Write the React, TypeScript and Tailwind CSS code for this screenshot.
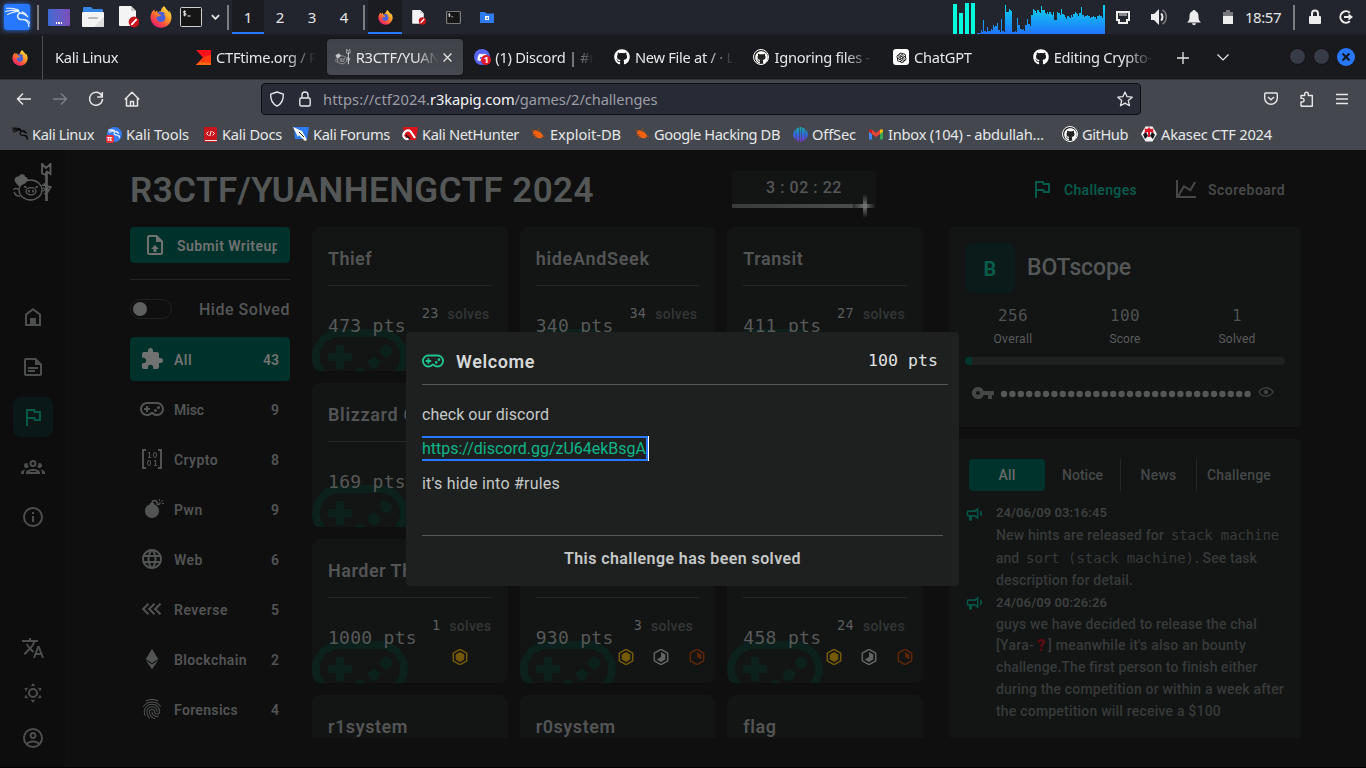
import { useLayoutEffect, useRef, useState, type ReactNode } from "react";
import { SiKalilinux } from "react-icons/si";
import { FaFirefoxBrowser, FaGithub, FaDiscord } from "react-icons/fa";
import { MdFingerprint, MdLanguage, MdVpnKey } from "react-icons/md";
import { AiOutlineOpenAI } from "react-icons/ai";

/* Text that is tracked so that it fills exactly `w` pixels. */
function Label({ w, className = "", children }: { w: number; className?: string; children: string }) {
  const ref = useRef<HTMLSpanElement>(null);
  const [spacing, setSpacing] = useState(0);
  useLayoutEffect(() => {
    if (ref.current) {
      const natural = ref.current.getBoundingClientRect().width;
      setSpacing((w - natural) / children.length);
    }
  }, [w, children]);
  return (
    <span ref={ref} className={"inline-block whitespace-nowrap " + className} style={{ letterSpacing: spacing }}>
      {children}
    </span>
  );
}

const P = {
  home: "M12 3L4 9V21H20V9L12 3M12 5.5L18 10V19H15V13H9V19H6V10L12 5.5",
  note: "M15 3H5A2 2 0 0 0 3 5V19A2 2 0 0 0 5 21H19A2 2 0 0 0 21 19V9L15 3M19 19H5V5H14V10H19M17 14H7V12H17M14 17H7V15H14",
  flag: "M12.36,6L12.76,8H18V14H14.64L14.24,12H7V6H12.36M14,4H5V21H7V14H12.6L13,16H20V6H14.4",
  group:
    "M12,5A3.5,3.5 0 0,0 8.5,8.5A3.5,3.5 0 0,0 12,12A3.5,3.5 0 0,0 15.5,8.5A3.5,3.5 0 0,0 12,5M12,7A1.5,1.5 0 0,1 13.5,8.5A1.5,1.5 0 0,1 12,10A1.5,1.5 0 0,1 10.5,8.5A1.5,1.5 0 0,1 12,7M5.5,8A2.5,2.5 0 0,0 3,10.5C3,11.44 3.53,12.25 4.29,12.68C4.65,12.88 5.06,13 5.5,13C5.94,13 6.35,12.88 6.71,12.68C7.08,12.47 7.39,12.17 7.62,11.81C6.89,10.86 6.5,9.7 6.5,8.5C6.5,8.41 6.5,8.31 6.5,8.22C6.2,8.08 5.86,8 5.5,8M18.5,8C18.14,8 17.8,8.08 17.5,8.22C17.5,8.31 17.5,8.41 17.5,8.5C17.5,9.7 17.11,10.86 16.38,11.81C16.5,12 16.63,12.15 16.78,12.3C16.94,12.45 17.1,12.58 17.29,12.68C17.65,12.88 18.06,13 18.5,13C18.94,13 19.35,12.88 19.71,12.68C20.47,12.25 21,11.44 21,10.5A2.5,2.5 0 0,0 18.5,8M12,14C9.66,14 5,15.17 5,17.5V19H19V17.5C19,15.17 14.34,14 12,14M4.71,14.55C2.78,14.78 0,15.76 0,17.5V19H3V17.07C3,16.06 3.69,15.22 4.71,14.55M19.29,14.55C20.31,15.22 21,16.06 21,17.07V19H24V17.5C24,15.76 21.22,14.78 19.29,14.55M12,16C13.53,16 15.24,16.5 16.23,17H7.77C8.76,16.5 10.47,16 12,16Z",
  info: "M11,9H13V7H11M12,20C7.59,20 4,16.41 4,12C4,7.59 7.59,4 12,4C16.41,4 20,7.59 20,12C20,16.41 16.41,20 12,20M12,2A10,10 0 0,0 2,12A10,10 0 0,0 12,22A10,10 0 0,0 22,12A10,10 0 0,0 12,2M11,17H13V11H11V17Z",
  translate:
    "M12.87,15.07L10.33,12.56L10.36,12.53C12.1,10.59 13.34,8.36 14.07,6H17V4H10V2H8V4H1V6H12.17C11.5,7.92 10.44,9.75 9,11.35C8.07,10.32 7.3,9.19 6.69,8H4.69C5.42,9.63 6.42,11.17 7.67,12.56L2.58,17.58L4,19L9,14L12.11,17.11L12.87,15.07M18.5,10H16.5L12,22H14L15.12,19H19.87L21,22H23L18.5,10M15.88,17L17.5,12.67L19.12,17H15.88Z",
  sun: "M12,7A5,5 0 0,1 17,12A5,5 0 0,1 12,17A5,5 0 0,1 7,12A5,5 0 0,1 12,7M12,9A3,3 0 0,0 9,12A3,3 0 0,0 12,15A3,3 0 0,0 15,12A3,3 0 0,0 12,9M12,2L14.39,5.42C13.65,5.15 12.84,5 12,5C11.16,5 10.35,5.15 9.61,5.42L12,2M3.34,7L7.5,6.65C6.9,7.16 6.36,7.78 5.94,8.5C5.5,9.24 5.25,10 5.11,10.79L3.34,7M3.36,17L5.12,13.23C5.26,14 5.53,14.78 5.95,15.5C6.37,16.24 6.91,16.86 7.5,17.37L3.36,17M20.65,7L18.88,10.79C18.74,10 18.47,9.23 18.05,8.5C17.63,7.78 17.1,7.15 16.5,6.64L20.65,7M20.64,17L16.5,17.36C17.09,16.85 17.62,16.22 18.04,15.5C18.46,14.77 18.73,14 18.87,13.21L20.64,17M12,22L9.59,18.56C10.33,18.83 11.14,19 12,19C12.82,19 13.63,18.83 14.37,18.56L12,22Z",
  account:
    "M12,2A10,10 0 0,0 2,12A10,10 0 0,0 12,22A10,10 0 0,0 22,12A10,10 0 0,0 12,2M7.07,18.28C7.5,17.38 10.12,16.5 12,16.5C13.88,16.5 16.5,17.38 16.93,18.28C15.57,19.36 13.86,20 12,20C10.14,20 8.43,19.36 7.07,18.28M18.36,16.83C16.93,15.09 13.46,14.5 12,14.5C10.54,14.5 7.07,15.09 5.64,16.83C4.62,15.5 4,13.82 4,12C4,7.59 7.59,4 12,4C16.41,4 20,7.59 20,12C20,13.82 19.38,15.5 18.36,16.83M12,6C10.06,6 8.5,7.56 8.5,9.5C8.5,11.44 10.06,13 12,13C13.94,13 15.5,11.44 15.5,9.5C15.5,7.56 13.94,6 12,6M12,11A1.5,1.5 0 0,1 10.5,9.5A1.5,1.5 0 0,1 12,8A1.5,1.5 0 0,1 13.5,9.5A1.5,1.5 0 0,1 12,11Z",
  upload:
    "M14,2L20,8V20A2,2 0 0,1 18,22H6A2,2 0 0,1 4,20V4A2,2 0 0,1 6,2H14M18,20V9H13V4H6V20H18M12,12L16,16H13.5V19H10.5V16H8L12,12Z",
  puzzle:
    "M20.5,11H19V7C19,5.89 18.1,5 17,5H13V3.5A2.5,2.5 0 0,0 10.5,1A2.5,2.5 0 0,0 8,3.5V5H4A2,2 0 0,0 2,7V10.8H3.5C5,10.8 6.2,12 6.2,13.5C6.2,15 5,16.2 3.5,16.2H2V20A2,2 0 0,0 4,22H7.8V20.5C7.8,19 9,17.8 10.5,17.8C12,17.8 13.2,19 13.2,20.5V22H17A2,2 0 0,0 19,20V16H20.5A2.5,2.5 0 0,0 23,13.5A2.5,2.5 0 0,0 20.5,11Z",
  gamepad:
    "M6,9H8V11H10V13H8V15H6V13H4V11H6V9M18.5,9A1.5,1.5 0 0,1 20,10.5A1.5,1.5 0 0,1 18.5,12A1.5,1.5 0 0,1 17,10.5A1.5,1.5 0 0,1 18.5,9M15.5,12A1.5,1.5 0 0,1 17,13.5A1.5,1.5 0 0,1 15.5,15A1.5,1.5 0 0,1 14,13.5A1.5,1.5 0 0,1 15.5,12M17,5A7,7 0 0,1 24,12A7,7 0 0,1 17,19C15.04,19 13.27,18.2 12,16.9C10.73,18.2 8.96,19 7,19A7,7 0 0,1 0,12A7,7 0 0,1 7,5H17M7,7A5,5 0 0,0 2,12A5,5 0 0,0 7,17C8.64,17 10.09,16.21 11,15H13C13.91,16.21 15.36,17 17,17A5,5 0 0,0 22,12A5,5 0 0,0 17,7H7Z",
  matrix:
    "M2,2H6V4H4V20H6V22H2V2M20,4H18V2H22V22H18V20H20V4M9,5H10V10H11V11H8V10H9V6L8,6.5V5.5L9,5M15,13H16V18H17V19H14V18H15V14L14,14.5V13.5L15,13M9,13C10.1,13 11,14.34 11,16C11,17.66 10.1,19 9,19C7.9,19 7,17.66 7,16C7,14.34 7.9,13 9,13M9,14C8.45,14 8,14.9 8,16C8,17.1 8.45,18 9,18C9.55,18 10,17.1 10,16C10,14.9 9.55,14 9,14M15,5C16.1,5 17,6.34 17,8C17,9.66 16.1,11 15,11C13.9,11 13,9.66 13,8C13,6.34 13.9,5 15,5M15,6C14.45,6 14,6.9 14,8C14,9.1 14.45,10 15,10C15.55,10 16,9.1 16,8C16,6.9 15.55,6 15,6Z",
  bomb: "M11.25,6A3.25,3.25 0 0,1 14.5,2.75A3.25,3.25 0 0,1 17.75,6C17.75,6.42 18.08,6.75 18.5,6.75C18.92,6.75 19.25,6.42 19.25,6V5.25H20.75V6A2.25,2.25 0 0,1 18.5,8.25A2.25,2.25 0 0,1 16.25,6A1.75,1.75 0 0,0 14.5,4.25A1.75,1.75 0 0,0 12.75,6H14V7.29C16.89,8.15 19,10.83 19,14A7,7 0 0,1 12,21A7,7 0 0,1 5,14C5,10.83 7.11,8.15 10,7.29V6H11.25M22,6H24V7H22V6M19,4V2H20V4H19M20.91,4.38L22.33,2.96L23.04,3.67L21.62,5.09L20.91,4.38Z",
  ethereum: "M12,1.75L5.75,12.25L12,16L18.25,12.25L12,1.75M5.75,13.5L12,22.25L18.25,13.5L12,17.25L5.75,13.5Z",
  chevrons:
    "M21.2 7.4L16.6 12L21.2 16.6L19.8 18L13.8 12L19.8 6L21.2 7.4M15.2 7.4L10.6 12L15.2 16.6L13.8 18L7.8 12L13.8 6L15.2 7.4M9.2 7.4L4.6 12L9.2 16.6L7.8 18L1.8 12L7.8 6L9.2 7.4Z",
  chart: "M16,11.78L20.24,4.45L21.97,5.45L16.74,14.5L10.23,10.75L5.46,19H22V21H2V3H4V17.54L9.5,8L16,11.78Z",
  bullhorn:
    "M12,8H4A2,2 0 0,0 2,10V14A2,2 0 0,0 4,16H5V20A1,1 0 0,0 6,21H8A1,1 0 0,0 9,20V16H12L17,20V4L12,8M15,15.6L13,14H4V10H13L15,8.4V15.6M21.5,12C21.5,13.71 20.54,15.26 19,16V8C20.53,8.75 21.5,10.3 21.5,12Z",
};

function Icon({ d, className = "size-6" }: { d: string; className?: string }) {
  return (
    <svg viewBox="0 0 24 24" className={"shrink-0 " + className} fill="currentColor">
      <path d={d} />
    </svg>
  );
}

function Slot({ className, children }: { className: string; children?: ReactNode }) {
  return <div className={"flex h-full shrink-0 items-center justify-center " + className}>{children}</div>;
}

function Separator({ className = "w-2" }: { className?: string }) {
  return (
    <Slot className={className}>
      <div className="h-[25px] w-[2px] bg-[#7c7d81]" />
    </Slot>
  );
}

function Firefox({ className }: { className: string }) {
  return (
    <svg viewBox="0 0 512 512" className={className}>
      <defs>
        <linearGradient id="fox" x1="0.85" y1="0.05" x2="0.2" y2="0.95">
          <stop offset="0" stopColor="#ffe14a" />
          <stop offset="0.4" stopColor="#ff9a26" />
          <stop offset="0.7" stopColor="#ff4f3f" />
          <stop offset="1" stopColor="#e31b74" />
        </linearGradient>
      </defs>
      <circle cx="255" cy="275" r="150" fill="#4a5fd8" />
      <FaFirefoxBrowser size={512} fill="url(#fox)" />
    </svg>
  );
}

function BlockedDoc({ className }: { className: string }) {
  return (
    <svg viewBox="0 0 20 22" className={className}>
      <path d="M0 1a1 1 0 0 1 1-1h11l5 5v14a1 1 0 0 1-1 1H1a1 1 0 0 1-1-1z" fill="#f4f4f4" />
      <path d="M12 0l5 5h-4a1 1 0 0 1-1-1z" fill="#c9c9c9" />
      <circle cx="15" cy="16" r="5.4" fill="#c8141c" />
      <path d="M12.8 18.4l4.4-4.8" stroke="#fff" strokeWidth="1.8" strokeLinecap="round" />
    </svg>
  );
}

function Terminal({ className }: { className: string }) {
  return (
    <svg viewBox="0 0 22 20" className={className}>
      <rect x="0.5" y="0.5" width="21" height="19" rx="1" fill="#161616" stroke="#cfcfcf" />
      <path
        d="M6 4.8c-.5-.7-2.7-.9-2.7.4 0 1.2 2.8.7 2.8 2.1 0 1.3-2.3 1.2-2.9.3M4.700 3.500v5.800M7.500 9h3"
        stroke="#f2f2f2"
        strokeWidth="1"
        fill="none"
      />
    </svg>
  );
}

const LOAD = [
  1, 1, 4, 14, 3, 7, 3, 5, 9, 8, 11, 4, 15, 3, 29, 22, 25, 23, 2, 3, 16, 9, 5, 5, 9, 15, 10, 19, 25, 23, 24, 22, 28, 24, 21,
  22, 22, 20, 22, 14, 22, 21, 25, 20, 17, 18, 17, 19, 20, 22, 20, 21, 27, 19, 18, 19, 18, 17, 18, 17, 18, 19, 18, 29,
];

/* Single-pixel peaks stand alone in the quiet stretches of the load curve. */
const isPeak = (i: number) => LOAD[i] > 6 && LOAD[i] - (LOAD[i + 1] ?? 0) > 3;
const LOAD_PATH = LOAD.map((h, i) => {
  const next = LOAD[i + 1] ?? h;
  const second = isPeak(i) ? next : Math.max(1, h - (i % 3));
  return `M${24 + i * 2} 34v${-h}h1v${h}zM${25 + i * 2} 34v${-second}h1v${second}z`;
}).join("");

function SystemLoad() {
  return (
    <svg width="152" height="34" viewBox="0 0 152 34" className="block shrink-0" shapeRendering="crispEdges">
      <defs>
        <linearGradient id="load" gradientUnits="userSpaceOnUse" x1="0" y1="4" x2="0" y2="34">
          <stop offset="0" stopColor="#09d8ea" />
          <stop offset="1" stopColor="#2274ff" />
        </linearGradient>
      </defs>
      <path d="M0 4h4v30H0zM6 13h4v21H6zM12 3h4v31h-4zM18 3h4v31h-4z" fill="#05f9dc" />
      <path d={LOAD_PATH} fill="url(#load)" />
    </svg>
  );
}

function DesktopPanel() {
  return (
    <header className="flex h-[36px] items-start border-b-2 border-[#1c1d22] bg-[#23252e]">
      <div className="flex h-[34px] w-full items-center text-[15px] text-[#e4e5e7]">
        <Slot className="w-[34px]">
          <div className="flex size-[26px] items-center justify-center rounded-[3px] bg-[#2777ff] shadow-[0_0_4px_#2777ff]">
            <SiKalilinux className="size-[25px] stroke-white stroke-[0.6] text-white" />
          </div>
        </Slot>
        <Separator />
        <Slot className="w-[34px]">
          <div className="flex h-[17px] w-[22px] items-end justify-center gap-px rounded-[1px] bg-gradient-to-r from-[#3b6ad6] to-[#7a4fb8] pb-[2px]">
            <i className="size-[1.5px] bg-white" />
            <i className="size-[1.5px] bg-white" />
            <i className="size-[1.5px] bg-white" />
          </div>
        </Slot>
        <Slot className="w-[34px]">
          <svg viewBox="0 0 22 20" className="h-5 w-[22px]">
            <path d="M1 6V1a1 1 0 0 1 1-1h7l2 2h9a1 1 0 0 1 1 1v4z" fill="#3584e4" />
            <rect y="5" width="22" height="15" rx="1" fill="#f3f3f3" />
            <path d="M22 10v9a1 1 0 0 1-1 1H12z" fill="#dedede" />
            <rect x="6" y="10" width="10" height="2" rx="1" fill="#b9b9b9" />
          </svg>
        </Slot>
        <Slot className="w-[37px]">
          <BlockedDoc className="h-[22px] w-5" />
        </Slot>
        <Slot className="w-[28px]">
          <Firefox className="size-[22px]" />
        </Slot>
        <Slot className="w-[31px]">
          <Terminal className="h-5 w-[22px]" />
        </Slot>
        <Slot className="w-[18px]">
          <svg viewBox="0 0 10 6" className="h-[6px] w-[9px]" fill="none" stroke="#e8e8e8" strokeWidth="2">
            <path d="M1 1l4 4 4-4" />
          </svg>
        </Slot>
        <Separator />
        <Slot className="w-8 border-b-2 border-[#2777ff] bg-[#1b1c22] pt-[2px]">1</Slot>
        <Slot className="w-8">2</Slot>
        <Slot className="w-8">3</Slot>
        <Slot className="w-8">4</Slot>
        <Separator />
        <Slot className="w-[34px] border-b-2 border-[#2777ff] bg-[#1b1c22] pt-[2px]">
          <Firefox className="size-[15px]" />
        </Slot>
        <Slot className="w-[34px]">
          <BlockedDoc className="h-[15px] w-[14px]" />
        </Slot>
        <Slot className="w-[34px]">
          <Terminal className="h-[13px] w-[15px]" />
        </Slot>
        <Slot className="w-[34px]">
          <svg viewBox="0 0 14 11" className="h-[11px] w-[14px]">
            <path d="M0 11V0h5l1.5 1.5H14V11z" fill="#2e7cf0" />
            <rect x="5" y="4" width="4" height="4" fill="#fff" />
            <rect x="6.5" y="5.5" width="1.5" height="1.5" fill="#2e7cf0" />
          </svg>
        </Slot>
        <div className="ml-auto flex h-full items-center">
          <SystemLoad />
          <Slot className="w-[36px]">
            <svg viewBox="0 0 14 13" className="h-[13px] w-[14px]" fill="none" stroke="#ededed" strokeWidth="2">
              <path d="M1 1h12v8h-2v3H3V9H1z" />
              <path d="M4 2v3M6 2v3M8 2v3M10 2v3" strokeWidth="1" />
            </svg>
          </Slot>
          <Slot className="w-[36px]">
            <svg viewBox="0 0 18 16" className="h-4 w-[18px]">
              <path d="M1 5h3l5-5v16L4 11H1z" fill="#ededed" />
              <path d="M11 4.5c2 1.5 2 5.5 0 7" stroke="#ededed" strokeWidth="2" fill="none" />
              <path d="M12.500 1c5 3 5 11 0 14" stroke="#77787c" strokeWidth="1.6" fill="none" />
            </svg>
          </Slot>
          <Slot className="w-[34px]">
            <svg viewBox="0 0 14 15" className="h-[15px] w-[14px]" fill="#ededed">
              <path d="M7 0c1 0 1.5.6 1.5 1.3C11 2 11.5 4 11.5 6.5c0 3 .5 4 2.5 6H0c2-2 2.500-3 2.500-6C2.500 4 3 2 5.500 1.300 5.500.6 6 0 7 0zM5 13.200h4C8.700 14.500 8 15 7 15s-1.700-.5-2-1.800z" />
            </svg>
          </Slot>
          <Slot className="w-[34px]">
            <svg viewBox="0 0 10 14" className="h-[14px] w-[10px]">
              <path d="M3 0h4v2h3v4H0V2h3z" fill="#77787c" />
              <path d="M0 6h10v8H0z" fill="#ededed" />
            </svg>
          </Slot>
          <Slot className="w-[38px] pr-[2px]">
            <Label w={36}>18:57</Label>
          </Slot>
          <Separator className="w-[22px]" />
          <Slot className="w-[20px]">
            <svg viewBox="0 0 12 16" className="h-4 w-3">
              <path d="M3 8V4.500a3 3 0 0 1 6 0V8" fill="none" stroke="#ededed" strokeWidth="2" />
              <rect y="7" width="12" height="8" rx="1" fill="#ededed" />
            </svg>
          </Slot>
          <Slot className="w-[41px]">
            <svg viewBox="0 0 14 14" className="size-[14px]" fill="none" stroke="#ededed" strokeWidth="2">
              <path d="M10.800 2.700A5.700 5.700 0 1 0 10.800 11.300M5 7h6" />
              <path d="M9.500 3.500L14 7l-4.500 3.500z" fill="#ededed" stroke="none" />
            </svg>
          </Slot>
        </div>
      </div>
    </header>
  );
}

function Tab({ icon, title, active = false }: { icon?: ReactNode; title: string; active?: boolean }) {
  return (
    <div className="h-full w-[139.6px] shrink-0 px-[1.5px] pt-[3px] pb-1">
      <div
        className={
          "flex h-full items-center gap-[5px] rounded-[4px] " +
          (icon ? "pl-[8px] " : "pl-[7.500px] ") +
          (active ? "bg-gradient-to-b from-[#3f4248] to-[#464950] shadow-[0_0_2px_#0006]" : "")
        }
      >
        {icon && <span className="flex size-4 shrink-0 items-center justify-center">{icon}</span>}
        <span
          className={
            "overflow-hidden whitespace-nowrap tracking-[-0.28px] [mask-image:linear-gradient(to_right,#000_72%,transparent)] " +
            (active ? "w-[83px]" : "w-[99px]")
          }
        >
          {title}
        </span>
        {active && (
          <svg viewBox="0 0 8 8" className="-ml-[1px] size-[9px] shrink-0" stroke="#e8e8e8" strokeWidth="1.1">
            <path d="M.5.5l7 7M7.5.5l-7 7" />
          </svg>
        )}
      </div>
    </div>
  );
}

function PigLogo({ className }: { className: string }) {
  return (
    <svg viewBox="0 0 40 40" className={className} fill="none" stroke="currentColor" strokeWidth="1.3">
      <ellipse cx="17.5" cy="27" rx="11.5" ry="10" />
      <ellipse cx="18" cy="28.3" rx="5" ry="3.6" />
      <path d="M16 27v2.500M20 27v2.500M11 23.500l2.500 1M22.500 24.500l2.500-1" strokeWidth="1.6" />
      <path
        d="M3.500 19.500c-3-3 .5-7 3-5 .5-4 5.500-3 5 0 3-.5 3.500 3.500 1 4.500-2 2.500-4 1.500-5.500 4-1.500-.5-2.500-1.500-3.500-3.500z"
        fill="currentColor"
      />
      <path d="M.5 27c1-2 3-2 5-.5M1 29c1 2.500 3 4.500 6 4M29 22l5 1 4 1-3 5-4 2M29.500 25l7 2M31 20l4 8M30 28l7-4" />
      <path d="M33.500 9v29" strokeWidth="2.6" />
      <path d="M29 1l4 4 4.500-4v10L34 8.500 33 12l-4-1.500z" strokeWidth="1.8" />
    </svg>
  );
}

function RoundGithub() {
  return (
    <span className="flex size-4 items-center justify-center rounded-full border border-white bg-[#222]">
      <FaGithub className="size-[13px] text-white" />
    </span>
  );
}

function TabBar() {
  return (
    <div className="flex h-[43px] items-center bg-[#191a1e] text-[14.67px] text-[#e6e7e9]">
      <Slot className="w-[43px] border-r border-[#4d4e52] pr-[2px]">
        <Firefox className="size-4" />
      </Slot>
      <div className="flex h-full pl-[3px]">
        <Tab title="Kali Linux" />
        <Tab
          title="CTFtime.org / R"
          icon={
            <svg viewBox="0 0 15 15" className="size-[15px]">
              <path d="M0 0h15v15H0l7-7.5z" fill="#f8131c" />
              <path d="M7 7.5l8-3V15H0z" fill="#ff3b10" />
              <path d="M0 15l4-3 11 1v2z" fill="#ff6a12" />
            </svg>
          }
        />
        <Tab active title="R3CTF/YUANH" icon={<PigLogo className="size-4 text-[#c9cacc]" />} />
        <Tab
          title="(1) Discord | #ru"
          icon={
            <span className="relative flex size-4 items-center justify-center rounded-full bg-[#5865f2]">
              <FaDiscord className="size-[11px] text-white" />
              <span className="absolute right-[-1px] bottom-0 flex size-[10px] items-center justify-center rounded-full bg-[#e0182a] text-[9px] font-bold text-white">
                1
              </span>
            </span>
          }
        />
        <Tab title="New File at / · Li" icon={<FaGithub className="size-4 text-white" />} />
        <Tab title="Ignoring files - G" icon={<RoundGithub />} />
        <Tab
          title="ChatGPT"
          icon={
            <span className="flex size-4 items-center justify-center rounded-[3px] bg-white">
              <AiOutlineOpenAI className="size-[13px] text-black" />
            </span>
          }
        />
        <Tab title="Editing Crypto-C" icon={<FaGithub className="size-4 text-white" />} />
      </div>
      <Slot className="w-[40px]">
        <svg viewBox="0 0 12 12" className="size-3" stroke="#e8e8e8" strokeWidth="1.3">
          <path d="M6 0v12M0 6h12" />
        </svg>
      </Slot>
      <Slot className="w-[40px]">
        <svg viewBox="0 0 12 7" className="h-[7px] w-3" fill="none" stroke="#e8e8e8" strokeWidth="1.2">
          <path d="M.5.5L6 6 11.5.5" />
        </svg>
      </Slot>
      <div className="ml-auto flex gap-[7px] pr-[11px] pb-px">
        <span className="size-[17px] rounded-full border border-[#0e0f12] bg-[#373b46]" />
        <span className="size-[17px] rounded-full border border-[#0e0f12] bg-[#373b46]" />
        <span className="flex size-[18px] items-center justify-center rounded-full bg-[#2777ff]">
          <svg viewBox="0 0 8 8" className="size-2" stroke="#14151a" strokeWidth="2">
            <path d="M.5.5l7 7M7.5.5l-7 7" />
          </svg>
        </span>
      </div>
    </div>
  );
}

function NavBar() {
  return (
    <div className="flex h-[41px] items-center border-t border-[#303237] pb-[2px] text-[#e6e7e9]">
      <Slot className="w-[48px]">
        <svg viewBox="0 0 16 14" className="h-[14px] w-4" fill="none" stroke="currentColor" strokeWidth="1.4">
          <path d="M15 7H1.500M7 1.500L1.500 7 7 12.500" />
        </svg>
      </Slot>
      <Slot className="w-[24px]">
        <svg viewBox="0 0 16 14" className="h-[14px] w-4" fill="none" stroke="#7d8086" strokeWidth="1.4">
          <path d="M1 7h13.500M9 1.500L14.500 7 9 12.500" />
        </svg>
      </Slot>
      <Slot className="w-[48px]">
        <svg viewBox="0 0 16 16" className="size-4" fill="none" stroke="currentColor" strokeWidth="1.5">
          <path d="M13.600 4.500A6.500 6.500 0 1 0 14.500 8M14.300 1v5H9.300" />
        </svg>
      </Slot>
      <Slot className="w-[23px]">
        <svg viewBox="0 0 16 16" className="size-4" fill="none" stroke="currentColor" strokeWidth="1.5">
          <path d="M.8 8.500L8 1.300l7.200 7.200M2.500 7v8h11V7M6.500 15v-4.500h3V15" strokeLinejoin="round" />
        </svg>
      </Slot>
      <div className="ml-[118px] flex h-[32px] w-[880px] items-center rounded-[4px] border border-[#0d0e11] bg-[#282a36]">
        <svg viewBox="0 0 16 16" className="ml-[7px] size-4" fill="none" stroke="currentColor" strokeWidth="1.4">
          <path d="M8 1l6.300 2.200c.3 5.500-1.800 9.500-6.300 11.900C3.500 12.700 1.400 8.700 1.700 3.200z" strokeLinejoin="round" />
        </svg>
        <svg viewBox="0 0 12 16" className="ml-[14px] h-4 w-3" fill="none" stroke="currentColor" strokeWidth="1.4">
          <rect x=".8" y="7" width="10.4" height="8" rx="1.5" />
          <path d="M3 7V4a3 3 0 0 1 6 0v3" />
        </svg>
        <span className="ml-[12px] flex text-[14.67px] text-[#9c9da4]">
          <Label w={107}>https://ctf2024.</Label>
          <Label w={84.5} className="text-[#f4f4f6]">r3kapig.com</Label>
          <Label w={143}>/games/2/challenges</Label>
        </span>
        <svg viewBox="0 0 16 16" className="mr-[7px] ml-auto size-4" fill="none" stroke="currentColor" strokeWidth="1.3">
          <path d="M8 1l2.100 4.700 5.100.5-3.900 3.400 1.200 5.100L8 12.100l-4.500 2.600 1.200-5.100L.8 6.200l5.100-.5z" strokeLinejoin="round" />
        </svg>
      </div>
      <div className="ml-auto flex items-center gap-[21px] pr-[18px]">
        <svg viewBox="0 0 14 14" className="size-[14px]" fill="none" stroke="currentColor" strokeWidth="1.4">
          <path d="M1.500 1h11a.8.8 0 0 1 .8.8V6a6.300 6.300 0 0 1-12.600 0V1.800A.8.8 0 0 1 1.500 1zM4 5l3 2.800L10 5" />
        </svg>
        <svg viewBox="0 0 16 16" className="size-4" fill="none" stroke="currentColor" strokeWidth="1.4">
          <path d="M2 15.200V11h1.300a1.800 1.800 0 0 0 0-3.600H2V4.500h3.700V3a1.800 1.800 0 0 1 3.600 0v1.500h4v3M2 15.200h11.300V7.500" strokeLinejoin="round" />
        </svg>
        <svg viewBox="0 0 12 12" className="size-3" stroke="currentColor" strokeWidth="1.3">
          <path d="M0 1.500h12M0 6h12M0 10.500h12" />
        </svg>
      </div>
    </div>
  );
}

function Bug() {
  return (
    <svg viewBox="0 0 14 12" className="h-3 w-[14px]">
      <path d="M1.500 3c3-2 8 0 11 5-2 3.500-7 2.500-8.500 0C2 7 2.500 5 1.500 3z" fill="#f2620f" />
      <path d="M0 2l4 1.500M1 7l4-.5M3 11l2.500-3M8 0L7 3.500M14 9l-3-1" stroke="#a8461a" strokeWidth="0.8" />
    </svg>
  );
}

const BOOKMARKS: { label: string; w: number; slot: string; icon: ReactNode }[] = [
  {
    label: "Kali Linux",
    w: 62,
    slot: "w-[94px]",
    icon: <SiKalilinux className="size-4 stroke-black stroke-[0.8] text-black" />,
  },
  {
    label: "Kali Tools",
    w: 63,
    slot: "w-[96px]",
    icon: (
      <span className="relative flex size-[15px] items-center justify-center rounded-full bg-[#367bf0]">
        <SiKalilinux className="size-3 stroke-white stroke-1 text-white" />
        <span className="absolute bottom-[-1px] left-[-1px] size-[8px] rounded-[2px] bg-[#e8303a] text-center text-[7px] leading-[7px] font-bold text-white">
          π
        </span>
      </span>
    ),
  },
  {
    label: "Kali Docs",
    w: 60,
    slot: "w-[91px]",
    icon: (
      <svg viewBox="0 0 13 15" className="h-[15px] w-[13px]">
        <rect width="13" height="15" rx="1" fill="#c8141c" />
        <path d="M1 13h12v1H1z" fill="#eee" />
        <path d="M4.500 4.500l-2 2 2 2M8.500 4.500l2 2-2 2M7.200 4L5.800 9" stroke="#fff" fill="none" />
      </svg>
    ),
  },
  {
    label: "Kali Forums",
    w: 77,
    slot: "w-[109px]",
    icon: (
      <svg viewBox="0 0 16 14" className="h-[14px] w-4">
        <path d="M1 0h15l-2 12H2z" fill="#2b7cf6" />
        <path d="M0 0l9 4 5 9-2 1-6-6-1 2z" fill="#fff" />
        <path d="M6 5l5 5" stroke="#222" />
      </svg>
    ),
  },
  {
    label: "Kali NetHunter",
    w: 97,
    slot: "w-[128px]",
    icon: (
      <svg viewBox="0 0 16 14" className="h-[14px] w-4">
        <path d="M1 0h15l-2 13H3z" fill="#d8141c" />
        <path d="M1 8c2-5 6-6 8-3l4 6M1 8c1 4 4 5 6 3" stroke="#fff" strokeWidth="2.2" fill="none" />
        <path d="M4 8l4 4" stroke="#111" strokeWidth="1.5" />
      </svg>
    ),
  },
  { label: "Exploit-DB", w: 71, slot: "w-[104px]", icon: <Bug /> },
  { label: "Google Hacking DB", w: 126, slot: "w-[158px]", icon: <Bug /> },
  {
    label: "OffSec",
    w: 44,
    slot: "w-[76px]",
    icon: (
      <svg viewBox="0 0 15 15" className="size-[15px]">
        <defs>
          <linearGradient id="off" x1="0" y1="0" x2="0" y2="1">
            <stop offset="0" stopColor="#12b5a8" />
            <stop offset="0.5" stopColor="#2f6be0" />
            <stop offset="1" stopColor="#7a35c8" />
          </linearGradient>
        </defs>
        <path
          d="M2.800 2.500v10C-.8 10-.8 5 2.800 2.500zM3.300 1.800L6.300.2v14.600l-3-1.500zM7 0h1v15H7zM8.700.2l3 1.600v11.500l-3 1.500zM12.200 2.500c3.600 2.500 3.600 7.500 0 10z"
          fill="url(#off)"
        />
      </svg>
    ),
  },
  {
    label: "Inbox (104) - abdullah…",
    w: 156,
    slot: "w-[194px]",
    icon: (
      <svg viewBox="0 0 14 11" className="h-[11px] w-[14px]">
        <path d="M0 2v8.500h3V4.500z" fill="#4285f4" />
        <path d="M11 4.500v6h3V2z" fill="#34a853" />
        <path d="M0 2C0 0 2 0 3 .8V5L0 2.700z" fill="#c5221f" />
        <path d="M3 .8L7 4l4-3.200V5L7 8 3 5z" fill="#ea4335" />
        <path d="M11 .8c1-.8 3-.8 3 1.200v.7L11 5z" fill="#fbbc04" />
      </svg>
    ),
  },
  { label: "GitHub", w: 46, slot: "w-[79px]", icon: <RoundGithub /> },
  {
    label: "Akasec CTF 2024",
    w: 111,
    slot: "w-[131px]",
    icon: (
      <svg viewBox="0 0 16 16" className="size-4">
        <path d="M4.500.5h7L16 8l-4.500 7.500h-7L0 8z" fill="#f4f4f4" />
        <path d="M5 6L2 8.500l2 4.500 3-3zM11 6l3 2.500-2 4.500-3-3z" fill="#16171b" />
        <path d="M8 1l1.500 2 3-.5L12 5l1 2-4-1v5H7V6L3 7l1-2-.5-2.500 3 .5z" fill="#e0182a" />
      </svg>
    ),
  },
];

function BookmarksBar() {
  return (
    <div className="flex h-[30px] items-center pb-[2px] pl-[12px] text-[14.67px] text-[#e6e7e9]">
      {BOOKMARKS.map((b) => (
        <div key={b.label} className={"flex shrink-0 items-center gap-1 " + b.slot}>
          <span className="flex size-4 shrink-0 items-center justify-center">{b.icon}</span>
          <Label w={b.w}>{b.label}</Label>
        </div>
      ))}
    </div>
  );
}

function Sidebar() {
  return (
    <nav className="flex w-[65px] shrink-0 flex-col items-center bg-[#0d0d0d] text-[#4d4f4f]">
      <PigLogo className="mt-[13px] size-10 text-[#5c5d5d]" />
      <div className="mt-[89px] flex flex-col">
        {[P.home, P.note, P.flag, P.group, P.info].map((d, i) => (
          <div key={i} className="flex h-[50px] items-center justify-center">
            <div
              className={
                "flex size-10 items-center justify-center rounded-lg " + (i === 2 ? "bg-[#0a1917] text-[#07594a]" : "")
              }
            >
              <Icon d={d} />
            </div>
          </div>
        ))}
      </div>
      <div className="mt-auto mb-[7px] flex flex-col">
        {[P.translate, P.sun, P.account].map((d, i) => (
          <div key={i} className="flex h-[45px] items-center justify-center">
            <Icon d={d} />
          </div>
        ))}
      </div>
    </nav>
  );
}

const CATEGORIES: { name: string; w: number; count: string; icon: ReactNode }[] = [
  { name: "All", w: 18, count: "43", icon: <Icon d={P.puzzle} /> },
  { name: "Misc", w: 30, count: "9", icon: <Icon d={P.gamepad} /> },
  { name: "Crypto", w: 44, count: "8", icon: <Icon d={P.matrix} /> },
  { name: "Pwn", w: 29, count: "9", icon: <Icon d={P.bomb} /> },
  { name: "Web", w: 29, count: "6", icon: <MdLanguage className="size-6" /> },
  { name: "Reverse", w: 54, count: "5", icon: <Icon d={P.chevrons} /> },
  { name: "Blockchain", w: 73, count: "2", icon: <Icon d={P.ethereum} /> },
  { name: "Forensics", w: 64, count: "4", icon: <MdFingerprint className="size-6" /> },
];

function Categories() {
  return (
    <div className="w-[160px] shrink-0">
      <button className="flex h-9 w-full items-center overflow-hidden rounded-[4px] bg-[#00312a] text-sm font-semibold text-[#707272]">
        <Icon d={P.upload} className="ml-[13px] size-6" />
        <span className="ml-[10px] w-[100px] overflow-hidden pt-px text-left">
          <Label w={103}>Submit Writeup</Label>
        </span>
      </button>
      <div className="mt-4 h-px bg-[#232424]" />
      <div className="mt-[19px] flex h-5 items-center justify-between">
        <div className="flex h-5 w-[42px] items-center rounded-full border border-[#202121] pl-[2px]">
          <span className="size-[14px] rounded-full bg-[#5e5f5f]" />
        </div>
        <Label w={91} className="pt-[2px] text-base font-medium text-[#555757]">Hide Solved</Label>
      </div>
      <div className="mt-[18px] flex flex-col gap-[6px]">
        {CATEGORIES.map((c, i) => (
          <div
            key={c.name}
            className={
              "flex h-11 items-center rounded-[4px] px-[10px] text-sm font-semibold " +
              (i === 0 ? "bg-[#00312a] text-[#707272]" : "text-[#525454]")
            }
          >
            {c.icon}
            <Label w={c.w} className="ml-[10px] pt-[2px]">{c.name}</Label>
            <span className="mr-px ml-auto pt-[2px]">{c.count}</span>
          </div>
        ))}
      </div>
    </div>
  );
}

const HEX = "M8 .3l6.700 3.850v7.700L8 15.700 1.300 11.850v-7.700z";

function Blood({ rank }: { rank: number }) {
  const tone = ["text-[#75590b]", "text-[#626363]", "text-[#5d2708]"][rank];
  const slice = [
    "M8 3l4.300 2.500v5L8 13l-4.300-2.500v-5z",
    "M8 3l4.300 2.500v5L8 13l-4.300-2.500L8 8z",
    "M8 3l4.300 2.500v5L8 8z",
  ][rank];
  return (
    <svg viewBox="0 0 16 16" className={"size-4 " + tone}>
      <path d={HEX} fill="none" stroke="currentColor" strokeWidth="1.5" />
      <path d={slice} fill="currentColor" />
    </svg>
  );
}

type Challenge = {
  id: number;
  name?: string;
  w?: number;
  pts?: string;
  solves?: string;
  bloods?: number;
  wide?: boolean;
};

const CHALLENGES: Challenge[] = [
  { id: 1, name: "Thief", w: 44, pts: "473", solves: "23" },
  { id: 2, name: "hideAndSeek", w: 114, pts: "340", solves: "34" },
  { id: 3, name: "Transit", w: 60, pts: "411", solves: "27" },
  { id: 4, name: "Blizzard CTF", w: 110, pts: "169" },
  { id: 5 },
  { id: 6 },
  { id: 7, name: "Harder Thief", w: 107, pts: "1000", solves: "1", bloods: 1, wide: true },
  { id: 8, pts: "930", solves: "3", bloods: 3 },
  { id: 9, pts: "458", solves: "24", bloods: 3 },
  { id: 10, name: "r1system", w: 80 },
  { id: 11, name: "r0system", w: 80 },
  { id: 12, name: "flag", w: 33 },
];

function ChallengeCard({ c }: { c: Challenge }) {
  return (
    <article className="relative h-36 overflow-hidden rounded-lg bg-[#131414] px-4">
      <Icon d={P.gamepad} className="absolute top-[82px] left-0 size-24 text-[#0c211c]" />
      <h3 className="flex h-[58px] items-center pt-[5px]">
        {c.name && (
          <Label w={c.w ?? 0} className="text-[18px] font-semibold text-[#535555]">
            {c.name}
          </Label>
        )}
      </h3>
      <div className="h-px bg-[#262727]" />
      <div className="relative flex justify-between">
        {c.pts && (
          <Label
            w={c.wide ? 89 : 78}
            className="mt-[28px] font-['DejaVu_Sans_Mono',monospace] text-[18px] leading-6 text-[#575959]"
          >
            {c.pts + " pts"}
          </Label>
        )}
        {c.solves && (
          <div
            className={"mt-[17px] flex w-[86px] shrink-0 flex-col items-center " + (c.wide ? "-mr-[13px]" : "-mr-[7px]")}
          >
            <div className="flex h-[22px] items-center text-sm font-medium text-[#343636]">
              <Label
                w={c.solves.length * 8.4}
                className="mr-[9px] font-['DejaVu_Sans_Mono',monospace] text-[13.5px] text-[#5c5e5e]"
              >
                {c.solves}
              </Label>
              <Label w={42}>solves</Label>
            </div>
            <div className="mt-[12px] -ml-[4px] flex gap-[19.5px]">
              {[0, 1, 2].slice(0, c.bloods ?? 0).map((r) => (
                <Blood key={r} rank={r} />
              ))}
            </div>
          </div>
        )}
      </div>
    </article>
  );
}

const STATS = [
  { value: "256", vw: 30, label: "Overall", lw: 39 },
  { value: "100", vw: 30, label: "Score", lw: 31 },
  { value: "1", vw: 10, label: "Solved", lw: 37 },
];

function TeamCard() {
  return (
    <section className="h-[200px] rounded-[4px] bg-[#131414] p-4">
      <div className="flex items-center gap-3">
        <div className="flex size-[50px] items-center justify-center rounded-lg bg-[#0b1b19] pt-[2px] text-xl font-bold text-[#075c4a]">
          B
        </div>
        <Label w={104} className="text-[23px] font-medium text-[#555757]">BOTscope</Label>
      </div>
      <div className="-mx-2 mt-[12px] grid grid-cols-3">
        {STATS.map((s) => (
          <div key={s.label} className="flex flex-col items-center">
            <Label w={s.vw} className="pt-px font-['DejaVu_Sans_Mono',monospace] text-base leading-5 text-[#4f5151]">
              {s.value}
            </Label>
            <Label w={s.lw} className="mt-[5px] text-[12px] leading-4 font-normal text-[#5a5c5c]">
              {s.label}
            </Label>
          </div>
        ))}
      </div>
      <div className="mt-[10px] h-2 overflow-hidden rounded-full bg-[#1f2120]">
        <div className="h-full w-[7px] bg-[#00362d]" />
      </div>
      <div className="mt-[16px] flex h-6 items-center pl-[6px] text-[#454747]">
        <MdVpnKey className="size-6" />
        <svg viewBox="0 0 252 8" className="mt-[2px] ml-[5px] h-2 w-[252px]" fill="#555757">
          {Array.from({ length: 30 }, (_, i) => (
            <circle key={i} cx={4 + i * 8.4} cy="4" r="3.2" />
          ))}
        </svg>
        <svg viewBox="0 0 16 10" className="mb-[2px] ml-[6px] h-[10px] w-4" fill="none" stroke="#404242">
          <path d="M.8 5C4-.6 12-.6 15.200 5 12 10.600 4 10.600.8 5z" strokeWidth="1.2" />
          <circle cx="8" cy="5" r="1.8" fill="#404242" />
        </svg>
      </div>
    </section>
  );
}

function Line({ w, children }: { w: number; children: string }) {
  return (
    <div className="flex h-[21.8px] items-center">
      <Label w={w}>{children}</Label>
    </div>
  );
}

function Notices() {
  const mono = "font-['DejaVu_Sans_Mono',monospace] text-[14px] font-normal";
  return (
    <section className="mt-3 h-[299px] overflow-hidden rounded-[4px] bg-[#131414] px-4 pt-5">
      <div className="ml-1 grid h-8 w-[304px] grid-cols-4 text-sm font-medium text-[#464848]">
        <span className="flex items-center justify-center rounded-[4px] bg-[#00332b] text-[#686a6a]">
          <Label w={17}>All</Label>
        </span>
        <span className="flex items-center justify-center border-r border-[#252626]">
          <Label w={41}>Notice</Label>
        </span>
        <span className="flex items-center justify-center border-r border-[#252626]">
          <Label w={36}>News</Label>
        </span>
        <span className="flex items-center justify-center pl-[8px]">
          <Label w={64}>Challenge</Label>
        </span>
      </div>
      <div className="mt-[13px] flex text-sm font-medium text-[#383a3a]">
        <Icon d={P.bullhorn} className="size-[19px] text-[#065444]" />
        <div className="ml-[12px]">
          <div className="flex h-[19px] items-center text-[13px] font-semibold text-[#3e4040]">
            <Label w={111}>24/06/09 03:16:45</Label>
          </div>
          <div className="flex h-[23px] items-center gap-[7px]">
            <Label w={168}>New hints are released for</Label>
            <Label w={108} className={mono}>stack machine</Label>
          </div>
          <div className="flex h-[23px] items-center">
            <Label w={23}>and</Label>
            <Label w={168} className={"ml-[7px] " + mono}>sort (stack machine)</Label>
            <Label w={62} className="ml-[1px]">. See task</Label>
          </div>
          <Line w={137}>description for detail.</Line>
        </div>
      </div>
      <div className="mt-[2px] flex text-sm font-medium text-[#383a3a]">
        <Icon d={P.bullhorn} className="size-[19px] text-[#065444]" />
        <div className="ml-[12px]">
          <div className="flex h-[20px] items-center text-[13px] font-semibold text-[#3e4040]">
            <Label w={111}>24/06/09 00:26:26</Label>
          </div>
          <Line w={261}>guys we have decided to release the chal</Line>
          <div className="flex h-[21.8px] items-center">
            <Label w={38}>[Yara-</Label>
            <span className="w-[14px] text-center text-base font-black text-[#5a0c15]">?</span>
            <Label w={198}>] meanwhile it's also an bounty</Label>
          </div>
          <Line w={261}>challenge.The first person to finish either</Line>
          <Line w={288}>during the competition or within a week after</Line>
          <Line w={225}>the competition will receive a $100</Line>
        </div>
      </div>
    </section>
  );
}

function PageHeader() {
  return (
    <div className="flex h-[77px] items-center">
      <h1 className="w-[602px] pt-[5px]">
        <Label w={464} className="text-[35px] font-semibold text-[#555757]">R3CTF/YUANHENGCTF 2024</Label>
      </h1>
      <div className="relative w-36">
        <div className="mb-[3px] flex h-[33px] items-center justify-center bg-[#131414] pt-px text-base font-medium text-[#555757]">
          <Label w={76}>3 : 02 : 22</Label>
        </div>
        <div className="absolute -bottom-px left-0 h-1 w-[121px] bg-gradient-to-r from-[#393a3a] to-[#4a4b4b]" />
        <div className="absolute right-0 -bottom-px h-1 w-[23px] bg-[linear-gradient(to_right,#2c2d2d,#6b6c6c_52%,transparent)]" />
        <div className="absolute right-[9px] -bottom-[11px] h-[24px] w-1 bg-[linear-gradient(transparent,#717272,transparent)]" />
      </div>
      <div className="ml-[156px] flex items-center text-sm font-semibold text-[#464848]">
        <Icon d={P.flag} className="-ml-[2px] size-6 text-[#07594a]" />
        <Label w={73} className="ml-[10px] pt-[2px] text-[#07594a]">Challenges</Label>
        <Icon d={P.chart} className="ml-[37px] size-6" />
        <Label w={77} className="ml-[10px] pt-[2px]">Scoreboard</Label>
      </div>
    </div>
  );
}

function ChallengeModal() {
  return (
    <div
      role="dialog"
      className="absolute top-[182px] left-[406px] h-[254px] w-[553px] rounded-[4px] bg-[#1e201f] pt-[13px] pr-[11px] pl-4 text-base text-[#c6c8c8]"
    >
      <div className="flex h-8 items-center">
        <Icon d={P.gamepad} className="size-[22px] text-[#20c391]" />
        <Label w={79} className="ml-3 text-[18px] font-semibold text-[#d6d8d8]">Welcome</Label>
        <Label w={70} className="mr-[10px] ml-auto pt-px font-['DejaVu_Sans_Mono',monospace] text-[16.5px] text-[#dfe1e1]">
          100 pts
        </Label>
      </div>
      <div className="mt-[7px] h-px bg-[#565858]" />
      <div className="mt-[18px] flex h-6 items-center">
        <Label w={127}>check our discord</Label>
      </div>
      <div className="mt-[9px] flex h-[25px] w-[226px] items-center border-y-2 border-r-2 border-[#2777ff] text-[#0fb588]">
        <Label w={224}>https://discord.gg/zU64ekBsgA</Label>
        <span className="-mr-[3px] ml-[2px] h-[25px] w-px shrink-0 bg-white" />
      </div>
      <div className="mt-[11px] flex h-6 items-center">
        <Label w={138}>it's hide into #rules</Label>
      </div>
      <div className="mt-[39px] mr-[5px] h-px bg-[#565858]" />
      <div className="mt-[11px] mr-[5px] flex h-6 items-center justify-center font-semibold">
        <Label w={237}>This challenge has been solved</Label>
      </div>
    </div>
  );
}

export default function App() {
  return (
    <div className="flex h-[768px] w-[1366px] flex-col overflow-hidden bg-[#0f0f0f] font-['Noto_Sans',sans-serif]">
      <DesktopPanel />
      <TabBar />
      <div className="bg-[#44474e]">
        <NavBar />
        <BookmarksBar />
      </div>
      <div className="relative flex h-[618px] border-b border-black bg-[#0f0f0f] font-['Roboto',sans-serif]">
        <Sidebar />
        <main className="flex flex-1 flex-col px-[65px]">
          <PageHeader />
          <div className="flex h-[511px] overflow-hidden">
            <Categories />
            <div className="ml-[22px] grid h-[511px] w-[611px] shrink-0 grid-cols-3 content-start gap-3 overflow-hidden">
              {CHALLENGES.map((c) => (
                <ChallengeCard key={c.id} c={c} />
              ))}
            </div>
            <div className="ml-[26px] w-[352px] shrink-0">
              <TeamCard />
              <Notices />
            </div>
          </div>
        </main>
        <ChallengeModal />
      </div>
    </div>
  );
}
